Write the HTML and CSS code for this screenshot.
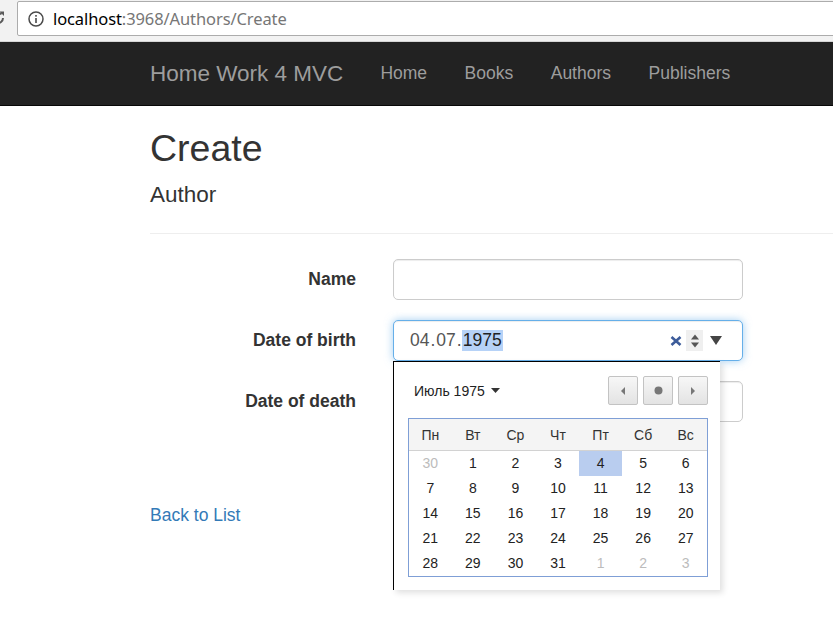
FILE: index.html
```html
<!DOCTYPE html>
<html lang="ru">
<head>
<meta charset="utf-8">
<title>Create - Home Work 4 MVC</title>
<link rel="stylesheet" href="styles.css">
</head>
<body>
<header class="chrome">
  <div class="reload">
    <svg width="16" height="16" viewBox="0 0 16 16"><path d="M13 8a5 5 0 1 1-1.5-3.6" fill="none" stroke="#5a5a5a" stroke-width="2"/><path d="M9.5 1.5h4.5v4.5z" fill="#5a5a5a"/></svg>
  </div>
  <div class="omnibox">
    <svg class="info" width="16" height="16" viewBox="0 0 16 16"><circle cx="8" cy="8" r="7" fill="none" stroke="#4a4a4a" stroke-width="1.5"/><rect x="7.2" y="7" width="1.6" height="5" fill="#4a4a4a"/><rect x="7.2" y="4" width="1.6" height="1.7" fill="#4a4a4a"/></svg>
    <span class="host">localhost</span><span class="path">:3968/Authors/Create</span>
  </div>
</header>

<nav class="navbar">
  <a class="brand" href="#">Home Work 4 MVC</a>
  <ul class="nav">
    <li><a href="#">Home</a></li>
    <li><a href="#">Books</a></li>
    <li><a href="#">Authors</a></li>
    <li><a href="#">Publishers</a></li>
  </ul>
</nav>

<main class="container">
  <h2 class="title">Create</h2>
  <h4 class="subtitle">Author</h4>
  <hr class="divider">

  <form class="form">
    <div class="form-group">
      <label class="label">Name</label>
      <div class="control"></div>
    </div>
    <div class="form-group">
      <label class="label">Date of birth</label>
      <div class="control focus date">
        <span class="seg">04</span><span class="sep">.</span><span class="seg">07</span><span class="sep">.</span><span class="seg sel">1975</span>
        <span class="grow"></span>
        <svg class="clear" width="12" height="10" viewBox="0 0 12 10"><path d="M1.5 1l9 8M10.5 1l-9 8" stroke="#3d5c9a" stroke-width="2.6"/></svg>
        <span class="spin">
          <svg width="10" height="20" viewBox="0 0 10 20"><path d="M1 8.5l4-5 4 5z" fill="#555"/><path d="M1 11.5l4 5 4-5z" fill="#555"/></svg>
        </span>
        <svg class="drop" width="12" height="9" viewBox="0 0 12 9"><path d="M0 0h12l-6 9z" fill="#444"/></svg>
      </div>
    </div>
    <div class="form-group">
      <label class="label">Date of death</label>
      <div class="control"></div>
    </div>
    <div class="form-group">
      <span class="label"></span>
      <span class="btn-slot"></span>
    </div>
  </form>

  <div class="back"><a href="#">Back to List</a></div>

  <div class="picker">
    <div class="picker-head">
      <span class="month">Июль 1975 <svg width="9" height="5" viewBox="0 0 9 5"><path d="M0 0h9l-4.5 5z" fill="#333"/></svg></span>
      <div class="nav-btns">
        <span class="pbtn"><svg width="6" height="8" viewBox="0 0 6 8"><path d="M5 0v8L1 4z" fill="#777"/></svg></span>
        <span class="pbtn"><svg width="9" height="9" viewBox="0 0 9 9"><circle cx="4.5" cy="4.5" r="4" fill="#777"/></svg></span>
        <span class="pbtn"><svg width="6" height="8" viewBox="0 0 6 8"><path d="M1 0v8l4-4z" fill="#777"/></svg></span>
      </div>
    </div>
    <div class="cal">
      <div class="cal-head">
        <span>Пн</span><span>Вт</span><span>Ср</span><span>Чт</span><span>Пт</span><span>Сб</span><span>Вс</span>
      </div>
      <div class="cal-body">
        <span class="out">30</span><span>1</span><span>2</span><span>3</span><span class="today">4</span><span>5</span><span>6</span>
        <span>7</span><span>8</span><span>9</span><span>10</span><span>11</span><span>12</span><span>13</span>
        <span>14</span><span>15</span><span>16</span><span>17</span><span>18</span><span>19</span><span>20</span>
        <span>21</span><span>22</span><span>23</span><span>24</span><span>25</span><span>26</span><span>27</span>
        <span>28</span><span>29</span><span>30</span><span>31</span><span class="out">1</span><span class="out">2</span><span class="out">3</span>
      </div>
    </div>
  </div>
</main>
</body>
</html>
```

FILE: styles.css
```css
* { box-sizing: border-box; }

html, body {
  margin: 0;
  padding: 0;
  background: #fff;
  overflow: hidden;
}

body {
  font-family: "Liberation Sans", Arial, sans-serif;
  font-size: 17.5px;
  color: #333;
  width: 833px;
  height: 627px;
  position: relative;
}

a { text-decoration: none; }

/* browser chrome */
.chrome {
  height: 42px;
  background: #f2f2f2;
  display: flex;
  align-items: flex-start;
  padding-top: 1px;
  border-bottom: 1px solid #d6d6d6;
}

.reload {
  width: 17px;
  height: 34px;
  display: flex;
  align-items: center;
  margin-left: -10px;
  margin-right: 10px;
  overflow: hidden;
}

.omnibox {
  flex: 1;
  height: 35px;
  margin-right: -10px;
  background: #fff;
  border: 1px solid #acacac;
  border-radius: 2px;
  display: flex;
  align-items: center;
  padding-left: 10px;
  font-family: "Noto Sans", "Open Sans", sans-serif;
  font-size: 16.5px;
  letter-spacing: -0.1px;
}

.info { margin-right: 9px; }
.host { color: #000; }
.path { color: #767676; }

/* navbar */
.navbar {
  height: 64px;
  background: #222;
  border-bottom: 1px solid #080808;
  display: flex;
  align-items: center;
  padding-left: 150px;
}

.brand {
  font-size: 22.5px;
  color: #9d9d9d;
  margin-right: 37px;
  line-height: 25px;
}

.nav {
  list-style: none;
  margin: 0;
  padding: 0;
  display: flex;
  gap: 37.5px;
}

.nav a {
  color: #9d9d9d;
  font-size: 17.5px;
  line-height: 25px;
}

/* content */
.container {
  padding-left: 150px;
}

.title {
  font-size: 37.5px;
  font-weight: 400;
  line-height: 41px;
  margin: 22px 0 0;
  color: #333;
}

.subtitle {
  font-size: 22.5px;
  font-weight: 400;
  line-height: 25px;
  margin: 13px 0 0;
  color: #333;
}

.divider {
  border: 0;
  border-top: 1px solid #eee;
  margin: 26px 0 0;
  height: 0;
}

.form {
  margin-top: 25px;
  display: flex;
  flex-direction: column;
  gap: 20px;
}

.form-group {
  display: flex;
  align-items: center;
  gap: 37px;
}

.label {
  width: 206px;
  text-align: right;
  font-weight: 700;
  color: #333;
  line-height: 25px;
}

.control {
  width: 350px;
  height: 41px;
  border: 1px solid #ccc;
  border-radius: 5px;
  background: #fff;
  box-shadow: inset 0 1px 1px rgba(0,0,0,.075);
}

.control.focus {
  border-color: #66afe9;
  box-shadow: inset 0 1px 1px rgba(0,0,0,.075), 0 0 8px rgba(102,175,233,.6);
}

.date {
  display: flex;
  align-items: center;
  padding-left: 15px;
  padding-right: 20px;
  color: #555;
  font-size: 17.5px;
}

.seg { padding: 0 1px; line-height: 21px; }
.sep { line-height: 21px; }
.sel { background: #b6d2f7; color: #222; }
.grow { flex: 1; }

.clear { margin-right: 4px; }

.spin {
  width: 17px;
  height: 21px;
  background: #efefef;
  display: flex;
  align-items: center;
  justify-content: center;
  margin-right: 7px;
}

.drop { margin-top: -1px; }

.btn-slot {
  display: block;
  height: 41px;
  width: 80px;
}

.back {
  margin-top: 20px;
  line-height: 25px;
}

.back a { color: #337ab7; }

/* date picker popup (overlay) */
.picker {
  position: absolute;
  left: 393px;
  top: 361px;
  width: 327px;
  height: 229px;
  background: #fff;
  border-top: 1px solid #000;
  border-left: 1px solid #000;
  box-shadow: 3px 3px 6px rgba(0,0,0,.12);
  padding: 14px 12px 0 14px;
  font-family: "Liberation Sans", Arial, sans-serif;
  font-size: 14px;
  color: #222;
}

.picker-head {
  height: 29px;
  display: flex;
  align-items: center;
  justify-content: space-between;
  margin-bottom: 13px;
}

.month {
  margin-left: 6px;
  display: flex;
  align-items: center;
  gap: 6px;
  color: #222;
}

.nav-btns {
  display: flex;
  gap: 5px;
}

.pbtn {
  width: 30px;
  height: 29px;
  border: 1px solid #c3c3c3;
  border-radius: 2px;
  background: linear-gradient(#f7f7f7, #e3e3e3);
  display: flex;
  align-items: center;
  justify-content: center;
}

.cal {
  width: 300px;
  border: 1px solid #7f9fd6;
}

.cal-head {
  display: grid;
  grid-template-columns: repeat(7, 1fr);
  height: 32px;
  background: #f4f4f4;
  border-bottom: 1px solid #d2d2d2;
  align-items: center;
  text-align: center;
  color: #333;
}

.cal-body {
  display: grid;
  grid-template-columns: repeat(7, 1fr);
  grid-auto-rows: 25px;
  text-align: center;
}

.cal-body span {
  line-height: 25px;
  color: #222;
}

.cal-body .out { color: #bcbcbc; }
.cal-body .today { background: #b9cdef; }
```
